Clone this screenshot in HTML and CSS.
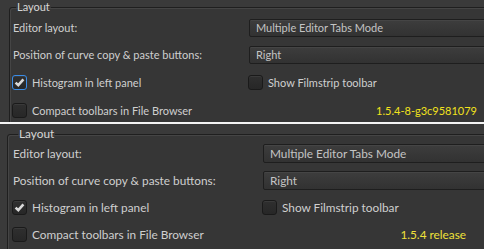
FILE: index.html
```html
<!DOCTYPE html>
<html lang="en">
<head>
  <meta charset="UTF-8">
  <title>Layout preferences</title>
  <link rel="stylesheet" href="styles.css">
</head>
<body>
  <!-- dev build -->
  <div class="shot shot-dev">
    <fieldset class="frame">
      <legend>Layout</legend>
      <div class="prefs">
        <span class="label">Editor layout:</span>
        <div class="combo">Multiple Editor Tabs Mode</div>

        <span class="label">Position of curve copy &amp; paste buttons:</span>
        <div class="combo">Right</div>

        <label class="check"><span class="box checked focus"></span>Histogram in left panel</label>
        <label class="check"><span class="box"></span>Show Filmstrip toolbar</label>

        <label class="check"><span class="box"></span>Compact toolbars in File Browser</label>
        <span class="version">1.5.4-8-g3c9581079</span>
      </div>
    </fieldset>
  </div>

  <div class="divider"></div>

  <!-- release build -->
  <div class="shot shot-release">
    <fieldset class="frame">
      <legend>Layout</legend>
      <div class="prefs">
        <span class="label">Editor layout:</span>
        <div class="combo">Multiple Editor Tabs Mode</div>

        <span class="label">Position of curve copy &amp; paste buttons:</span>
        <div class="combo">Right</div>

        <label class="check"><span class="box checked"></span>Histogram in left panel</label>
        <label class="check"><span class="box"></span>Show Filmstrip toolbar</label>

        <label class="check"><span class="box"></span>Compact toolbars in File Browser</label>
        <span class="version">1.5.4 release</span>
      </div>
    </fieldset>
  </div>
</body>
</html>
```

FILE: styles.css
```css
body {
  margin: 0;
  width: 484px;
  height: 249px;
  overflow: hidden;
  background: #3a3a3a;
  font-family: Lato, sans-serif;
  color: #cfcfcf;
}

.shot {
  overflow: hidden;
  background: #3a3a3a;
}

.shot-dev {
  height: 122px;
  font-size: 11px;
}

.shot-release {
  height: 125px;
  font-size: 11.8px;
}

.divider {
  height: 2px;
  background: #f4f4f4;
}

.frame {
  margin: 0 -20px 0 9px;
  padding: 0 0 40px 3px;
  border: 1px solid #1f1f1f;
  border-radius: 3px;
  box-shadow: inset 1px 1px 0 #454545;
  background: #363636;
}

.shot-release .frame {
  margin-left: 7px;
  padding-left: 5px;
}

.frame legend {
  padding: 0 1px;
  margin-left: 3px;
  line-height: 14px;
  color: #d6d6d6;
}

.shot-release .frame legend {
  line-height: 20px;
  margin-left: 5px;
}

.prefs {
  display: grid;
  grid-template-columns: 236px 1fr;
  grid-template-rows: 27px 27px 28px 28px;
  align-items: center;
}

.shot-release .prefs {
  grid-template-columns: 250px 1fr;
  grid-template-rows: 27px 27px 27px 27px;
  margin-top: -4px;
}

.combo {
  height: 16px;
  line-height: 16px;
  padding-left: 6px;
  border: 1px solid #1e1e1e;
  border-radius: 2px;
  background: linear-gradient(#3d3d3d, #323232);
  box-shadow: inset 0 1px 0 #454545;
  color: #c4c4c4;
}

.shot-release .combo {
  height: 17px;
  line-height: 17px;
}

.check {
  display: flex;
  align-items: center;
  gap: 5px;
  margin-left: -1px;
}

.box {
  box-sizing: border-box;
  width: 15px;
  height: 15px;
  border: 1px solid #1a1a1a;
  border-radius: 3px;
  background: linear-gradient(#2f2f2f, #272727);
  box-shadow: inset 0 1px 0 #3a3a3a;
}

.box.checked {
  background: no-repeat center / 11px 11px url("data:image/svg+xml,%3Csvg xmlns='http://www.w3.org/2000/svg' viewBox='0 0 11 11'%3E%3Cpath d='M1.6 5.6 L4.3 8.2 L9.4 2.4' fill='none' stroke='%23d8d8d8' stroke-width='2.6'/%3E%3C/svg%3E"), linear-gradient(#2f2f2f, #272727);
}

.box.focus {
  border-color: #3a8ce6;
}

.version {
  justify-self: end;
  margin-right: 26px;
  color: #f2e21c;
}

.shot-release .version {
  margin-right: 37px;
  color: #f0e23a;
}
```
